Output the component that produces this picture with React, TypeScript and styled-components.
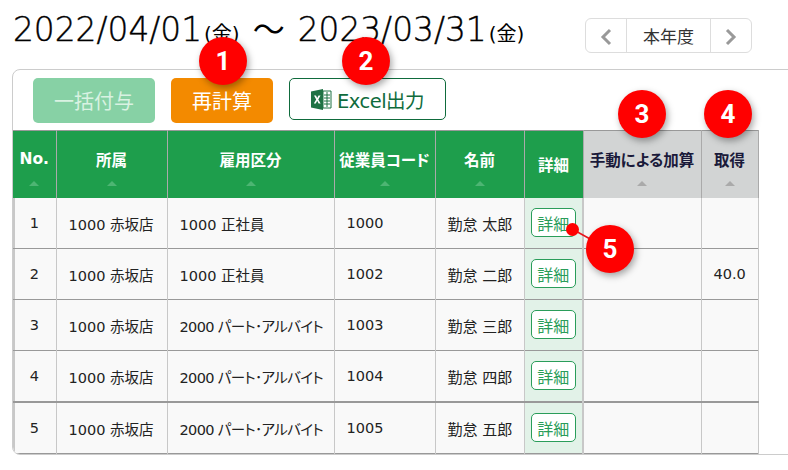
import React from 'react';
import styled, { createGlobalStyle } from 'styled-components';

const rows = [
  { no: 1, shop: '1000 赤坂店', kind: '1000 正社員', code: '1000', name: '勤怠 太郎', taken: '' },
  { no: 2, shop: '1000 赤坂店', kind: '1000 正社員', code: '1002', name: '勤怠 二郎', taken: '40.0' },
  { no: 3, shop: '1000 赤坂店', kind: '2000 パート･アルバイト', code: '1003', name: '勤怠 三郎', taken: '' },
  { no: 4, shop: '1000 赤坂店', kind: '2000 パート･アルバイト', code: '1004', name: '勤怠 四郎', taken: '' },
  { no: 5, shop: '1000 赤坂店', kind: '2000 パート･アルバイト', code: '1005', name: '勤怠 五郎', taken: '' },
];

const columns = [
  { label: 'No.', width: 43 },
  { label: '所属', width: 111 },
  { label: '雇用区分', width: 167 },
  { label: '従業員コード', width: 101 },
  { label: '名前', width: 89 },
];

const ExcelIcon = () => (
  <svg width="21" height="21" viewBox="0 0 21 21">
    <path d="M12 2h8v17h-8z" fill="#fff" stroke="#1f7244" strokeWidth="1" />
    <path d="M13 6h6M13 9h6M13 12h6M13 15h6M16 3v15" stroke="#1f7244" strokeWidth="1" />
    <path d="M0 2.500 12 0v21L0 18.500z" fill="#1f7244" />
    <path d="M3 6.500h2l1.200 2.600 1.300-2.600h2L7.300 10.500l2.300 4h-2L6.200 11.800l-1.400 2.700h-2l2.400-4z" fill="#fff" />
  </svg>
);

const App: React.FC = () => {
  return (
    <Page>
      <GlobalStyle />
      <TitleRow>
        <Title>
          2022/04/01<Week>(金)</Week>
          <Tilde>～</Tilde>
          2023/03/31<Week>(金)</Week>
        </Title>
        <YearNav>
          <NavArrow>
            <svg width="12" height="18" viewBox="0 0 12 18">
              <path d="M10 2 3 9l7 7" fill="none" stroke="#999" strokeWidth="3" />
            </svg>
          </NavArrow>
          <NavLabel>本年度</NavLabel>
          <NavArrow>
            <svg width="12" height="18" viewBox="0 0 12 18">
              <path d="m2 2 7 7-7 7" fill="none" stroke="#999" strokeWidth="3" />
            </svg>
          </NavArrow>
        </YearNav>
      </TitleRow>
      <Card>
        <Toolbar>
          <FillButton $bg="#87d1a5" $color="#d9f2e2" $width={122}>一括付与</FillButton>
          <FillButton $bg="#f38a00" $color="#fff" $width={102}>再計算</FillButton>
          <OutlineButton>
            <ExcelIcon />
            Excel出力
          </OutlineButton>
        </Toolbar>
        <Table>
          <colgroup>
            {columns.map((c) => (
              <col key={c.label} width={c.width} />
            ))}
            <col width={59} />
            <col width={118} />
            <col width={57} />
          </colgroup>
          <thead>
            <tr>
              {columns.map((c) => (
                <HeadCell key={c.label}>
                  {c.label}
                  <SortMark />
                </HeadCell>
              ))}
              <HeadCell $plain>詳細</HeadCell>
              <HeadCell $gray>
                手動による加算
                <SortMark $gray />
              </HeadCell>
              <HeadCell $gray>
                取得
                <SortMark $gray />
              </HeadCell>
            </tr>
          </thead>
          <tbody>
            {rows.map((r) => (
              <Row key={r.no} $thick={r.no === 5}>
                <Cell $align="center">{r.no}</Cell>
                <Cell>{r.shop}</Cell>
                <KindCell $narrow={r.kind.length > 8}>{r.kind}</KindCell>
                <Cell>{r.code}</Cell>
                <NameCell>{r.name}</NameCell>
                <DetailCell>
                  <DetailButton>詳細</DetailButton>
                </DetailCell>
                <Cell />
                <Cell $align="right">{r.taken}</Cell>
              </Row>
            ))}
          </tbody>
        </Table>
      </Card>
      <Badge $x={223} $y={61}>1</Badge>
      <Badge $x={366} $y={61}>2</Badge>
      <Badge $x={642} $y={114}>3</Badge>
      <Badge $x={728} $y={114}>4</Badge>
      <Pointer width="30" height="24" viewBox="0 0 30 24">
        <path d="M6 6 26 17" stroke="#e8141c" strokeWidth="1.500" />
        <circle cx="6.500" cy="6.500" r="6.500" fill="#f00" />
      </Pointer>
      <Badge $x={610} $y={249}>5</Badge>
    </Page>
  );
};

export default App;

const GlobalStyle = createGlobalStyle`
  html, body {
    margin: 0;
    background: #fff;
    overflow: hidden;
  }
  body {
    font-family: "DejaVu Sans", "Noto Sans CJK JP", sans-serif;
    color: #1a1a2a;
  }
`;

const Page = styled.div`
  position: relative;
  width: 788px;
  height: 470px;
  overflow: hidden;
  padding: 0 0 0 12px;
  box-sizing: border-box;
`;

const TitleRow = styled.div`
  height: 69px;
  display: flex;
  align-items: flex-start;
  justify-content: space-between;
  padding-right: 36px;
`;

const Title = styled.h1`
  margin: 10px 0 0 1px;
  font-size: 32.800px;
  line-height: 40px;
  font-weight: 200;
  color: #000;
  -webkit-text-stroke: 0.4px #000;
  white-space: nowrap;
`;

const Week = styled.span`
  margin-left: 2px;
  font-size: 20px;
  font-weight: 400;
  -webkit-text-stroke: 0;
`;

const Tilde = styled.span`
  margin: 0 13px 0 13px;
  font-size: 32px;
  font-weight: 400;
  -webkit-text-stroke: 0;
`;

const YearNav = styled.div`
  margin-top: 18px;
  width: 167px;
  height: 35px;
  box-sizing: border-box;
  display: flex;
  border: 1px solid #ddd;
  border-radius: 6px;
`;

const NavArrow = styled.div`
  width: 40px;
  flex: none;
  display: flex;
  align-items: center;
  justify-content: center;
  padding-top: 2px;
  box-sizing: border-box;
`;

const NavLabel = styled.div`
  flex: 1;
  display: flex;
  align-items: center;
  justify-content: center;
  font-size: 17px;
  color: #333;
  border-left: 1px solid #ddd;
  border-right: 1px solid #ddd;
`;

const Card = styled.div`
  width: 800px;
  height: 386px;
  box-sizing: border-box;
  border: 1px solid #ccc;
  border-radius: 8px;
  overflow: hidden;
`;

const Toolbar = styled.div`
  height: 60px;
  box-sizing: border-box;
  padding: 8px 0 0 20px;
  display: flex;
  align-items: flex-start;
  gap: 16px;
`;

const FillButton = styled.div<{ $bg: string; $color: string; $width: number }>`
  width: ${(p) => p.$width}px;
  height: 45px;
  display: flex;
  align-items: center;
  justify-content: center;
  border-radius: 5px;
  background: ${(p) => p.$bg};
  color: ${(p) => p.$color};
  font-size: 20px;
`;

const OutlineButton = styled.div`
  width: 157px;
  height: 42px;
  box-sizing: border-box;
  display: flex;
  align-items: center;
  justify-content: center;
  gap: 5px;
  border: 1px solid #0f6b3c;
  border-radius: 5px;
  color: #0f6b3c;
  font-size: 19.500px;
  letter-spacing: -0.500px;
`;

const Table = styled.table`
  width: 745px;
  table-layout: fixed;
  border-collapse: collapse;
  border-top: 1px solid #999;
  border-bottom: 1px solid #999;
`;

const HeadCell = styled.th<{ $gray?: boolean; $plain?: boolean }>`
  height: 67px;
  padding: ${(p) => (p.$plain ? '0' : '0 0 11px')};
  vertical-align: middle;
  text-align: center;
  box-sizing: border-box;
  background: ${(p) => (p.$gray ? '#d2d4d4' : '#1e9e4c')};
  color: ${(p) => (p.$gray ? '#1a1a3a' : '#fff')};
  border-right: 1px solid #aaa;
  font-size: 15.500px;
  font-weight: 700;
  font-feature-settings: "palt";
  white-space: nowrap;
  position: relative;
`;

const SortMark = styled.span<{ $gray?: boolean }>`
  position: absolute;
  left: 50%;
  bottom: 12px;
  margin-left: -5px;
  border-left: 5px solid transparent;
  border-right: 5px solid transparent;
  border-bottom: 5px solid ${(p) => (p.$gray ? '#aaa' : '#4db573')};
`;

const Row = styled.tr<{ $thick?: boolean }>`
  border-top: ${(p) => (p.$thick ? '2px solid #999' : '1px solid #999')};
  &:first-child {
    border-top: none;
  }
  & td:first-child {
    box-shadow: inset 2px 0 0 #c8c8c8;
  }
`;

const Cell = styled.td<{ $align?: 'left' | 'center' | 'right' }>`
  height: 49px;
  padding: 1px 12px 0;
  text-align: ${(p) => p.$align ?? 'left'};
  background: #f9f9f9;
  border-right: 1px solid #c8c8c8;
  font-size: 14.500px;
  white-space: nowrap;
  color: #222;
`;

const KindCell = styled(Cell)<{ $narrow?: boolean }>`
  font-feature-settings: "palt";
  letter-spacing: ${(p) => (p.$narrow ? '-0.65px' : '0')};
`;

const NameCell = styled(Cell)`
  font-size: 15px;
`;

const DetailCell = styled.td`
  height: 50px;
  padding: 0;
  text-align: center;
  background: #e2f2e8;
  border-right: 2px solid #c8c8c8;
`;

const DetailButton = styled.span`
  display: inline-flex;
  align-items: center;
  justify-content: center;
  width: 45px;
  height: 29px;
  box-sizing: border-box;
  background: #fff;
  border: 1px solid #2a9d5a;
  border-radius: 5px;
  color: #2a9d5a;
  font-size: 16px;
`;

const Badge = styled.div<{ $x: number; $y: number }>`
  position: absolute;
  left: ${(p) => p.$x - 24}px;
  top: ${(p) => p.$y - 24}px;
  width: 48px;
  height: 48px;
  border-radius: 50%;
  background: #f00;
  color: #fff;
  display: flex;
  align-items: center;
  justify-content: center;
  font-family: "Roboto", sans-serif;
  font-size: 26px;
  font-weight: 700;
  box-shadow: 2px 3px 7px rgba(0, 0, 0, 0.35);
`;

const Pointer = styled.svg`
  position: absolute;
  left: 566px;
  top: 223px;
`;
